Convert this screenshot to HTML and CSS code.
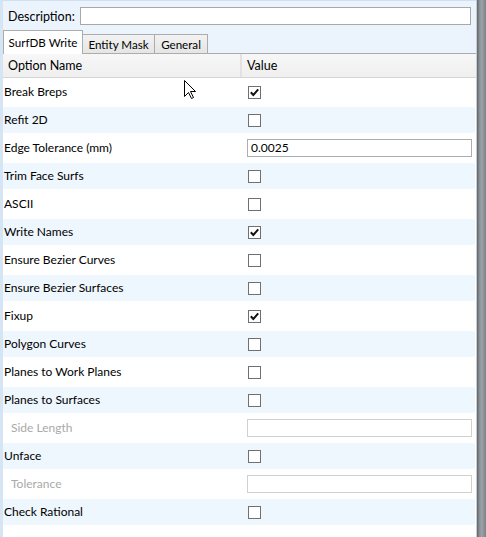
FILE: index.html
```html
<!DOCTYPE html>
<html>
<head>
<meta charset="utf-8">
<link rel="stylesheet" href="styles.css">
</head>
<body>
<div class="window">
  <div class="panel">
    <div class="top">
      <div class="desc">
        <span class="desc-label">Description:</span>
        <div class="desc-input"></div>
      </div>
      <div class="tabs">
        <div class="tab active">SurfDB Write</div>
        <div class="tab">Entity Mask</div>
        <div class="tab">General</div>
      </div>
    </div>
    <div class="grid-head">
      <div class="hcell name-col">Option Name</div>
      <div class="hcell value-col">Value</div>
    </div>
    <div class="rows">
      <div class="row"><div class="name">Break Breps</div><div class="val"><span class="cb checked"><svg viewBox="0 0 13 13"><path d="M2.8 6.3 L5.3 9 L10.2 3.4"/></svg></span></div></div>
      <div class="row alt"><div class="name">Refit 2D</div><div class="val"><span class="cb"></span></div></div>
      <div class="row"><div class="name">Edge Tolerance (mm)</div><div class="val"><div class="tbox">0.0025</div></div></div>
      <div class="row alt"><div class="name">Trim Face Surfs</div><div class="val"><span class="cb"></span></div></div>
      <div class="row"><div class="name">ASCII</div><div class="val"><span class="cb"></span></div></div>
      <div class="row alt"><div class="name">Write Names</div><div class="val"><span class="cb checked"><svg viewBox="0 0 13 13"><path d="M2.8 6.3 L5.3 9 L10.2 3.4"/></svg></span></div></div>
      <div class="row"><div class="name">Ensure Bezier Curves</div><div class="val"><span class="cb"></span></div></div>
      <div class="row alt"><div class="name">Ensure Bezier Surfaces</div><div class="val"><span class="cb"></span></div></div>
      <div class="row"><div class="name">Fixup</div><div class="val"><span class="cb checked"><svg viewBox="0 0 13 13"><path d="M2.8 6.3 L5.3 9 L10.2 3.4"/></svg></span></div></div>
      <div class="row alt"><div class="name">Polygon Curves</div><div class="val"><span class="cb"></span></div></div>
      <div class="row"><div class="name">Planes to Work Planes</div><div class="val"><span class="cb"></span></div></div>
      <div class="row alt"><div class="name">Planes to Surfaces</div><div class="val"><span class="cb"></span></div></div>
      <div class="row"><div class="name sub">Side Length</div><div class="val"><div class="tbox disabled"></div></div></div>
      <div class="row alt"><div class="name">Unface</div><div class="val"><span class="cb"></span></div></div>
      <div class="row"><div class="name sub">Tolerance</div><div class="val"><div class="tbox disabled"></div></div></div>
      <div class="row alt"><div class="name">Check Rational</div><div class="val"><span class="cb"></span></div></div>
    </div>
    <svg class="cursor" viewBox="0 0 13 20" width="13" height="20"><path d="M0.5 0.5 V16.5 L4.5 12.5 L7.5 18.5 L9.5 17.5 L6.5 11.5 H11.5 Z"/></svg>
  </div>
  <div class="frame"></div>
</div>
</body>
</html>
```

FILE: styles.css
```css
html, body {
  margin: 0;
  padding: 0;
  background: #ffffff;
}
body {
  font-family: Lato, "Noto Sans", "Open Sans", sans-serif;
  font-size: 12px;
  color: #000;
}
.window {
  display: flex;
  width: 486px;
  height: 537px;
  overflow: hidden;
}
.panel {
  position: relative;
  flex: 1;
  display: flex;
  flex-direction: column;
  border-left: 3px solid #d6e5f4;
  border-top: 1px solid #cfe0f1;
  background: #ffffff;
}
.frame {
  width: 9px;
  border-left: 1px solid #c9cdd2;
  background: linear-gradient(to right, #5f646b 0%, #8f949b 30%, #9ca1a8 55%, #7c8188 100%);
}
.top {
  background: #ebf4fd;
  display: flex;
  flex-direction: column;
}
.desc {
  display: flex;
  align-items: center;
  height: 18px;
  padding: 6px 5px 5px 5px;
}
.desc-label {
  width: 72px;
  font-size: 12.5px;
}
.desc-input {
  flex: 1;
  height: 16px;
  background: #fff;
  border: 1px solid #a8a8a8;
}
.tabs {
  display: flex;
  align-items: flex-end;
  height: 23px;
  border-bottom: 1px solid #acacac;
}
.tab {
  box-sizing: border-box;
  display: flex;
  align-items: center;
  justify-content: center;
  white-space: nowrap;
  height: 19px;
  padding-top: 1px;
  border: 1px solid #acacac;
  border-bottom: none;
  border-left: none;
  background: linear-gradient(to bottom, #f2f2f2, #e5e5e5);
  font-size: 11.6px;
}
.tab.active {
  height: 24px;
  padding-top: 0;
  padding-bottom: 1px;
  border-left: 1px solid #acacac;
  background: #ffffff;
  margin-bottom: -1px;
  width: 80px;
}
.tab:nth-child(2) { width: 72px; }
.tab:nth-child(3) { width: 53px; }
.grid-head {
  display: flex;
  height: 23px;
  border-bottom: 1px solid #d5d5d5;
  background: linear-gradient(to bottom, #f7f7f7, #efefef);
  font-size: 12.5px;
}
.hcell {
  display: flex;
  align-items: center;
}
.name-col {
  width: 232px;
  padding-left: 5px;
  border-right: 2px solid #e2e2e2;
}
.value-col {
  flex: 1;
  padding-left: 5px;
}
.rows {
  display: flex;
  flex-direction: column;
}
.row {
  display: flex;
  align-items: center;
  height: 28px;
}
.row.alt {
  height: 26px;
  margin: 1px 1px 1px 0;
  background: #eef6fe;
  border-radius: 0 2px 2px 0;
}
.name {
  width: 239px;
  padding-left: 1px;
  padding-bottom: 1px;
}
.name.sub {
  padding-left: 8px;
  width: 232px;
  color: #a9a9a9;
}
.val {
  flex: 1;
  display: flex;
  align-items: center;
  padding-left: 4px;
}
.cb {
  display: block;
  width: 11px;
  height: 11px;
  margin-left: 1px;
  border: 1px solid #707070;
  background: #fff;
}
.cb svg {
  display: block;
  width: 13px;
  height: 13px;
  margin: -1px 0 0 -1px;
}
.cb svg path {
  fill: none;
  stroke: #111;
  stroke-width: 2;
}
.tbox {
  width: 220px;
  height: 16px;
  line-height: 16px;
  border: 1px solid #abadb3;
  padding-left: 3px;
  background: #fff;
}
.tbox.disabled {
  border-color: #d2d2d2;
}
.cursor {
  position: absolute;
  left: 181px;
  top: 79px;
}
.cursor path {
  fill: #fff;
  stroke: #000;
  stroke-width: 1;
  stroke-linejoin: miter;
}
```
